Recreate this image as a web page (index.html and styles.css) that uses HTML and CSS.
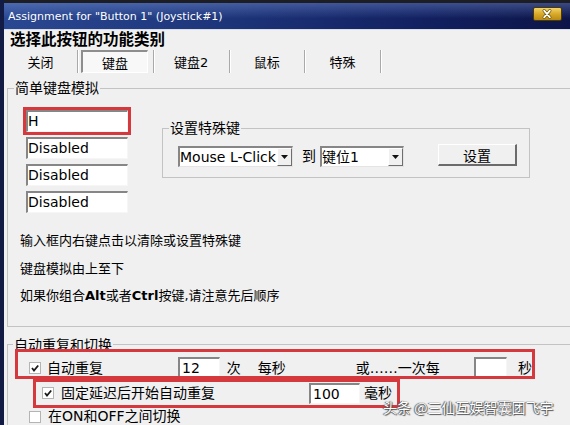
FILE: index.html
```html
<!DOCTYPE html>
<html lang="zh-CN">

<head>
    <meta charset="UTF-8">
    <title>Assignment for "Button 1" (Joystick#1)</title>
    <link rel="stylesheet" href="styles.css">
</head>

<body>
    <div class="window">
        <div class="titlebar">
            <span class="title">Assignment for "Button 1" (Joystick#1)</span>
            <span class="close-btn">
                <svg width="29" height="14" viewBox="0 0 29 14">
                    <path d="M11.5 3.5 L17.5 10.5 M17.5 3.5 L11.5 10.5" stroke="#6b5208" stroke-width="3.2" stroke-linecap="round" />
                    <path d="M11.5 3.5 L17.5 10.5 M17.5 3.5 L11.5 10.5" stroke="#fff" stroke-width="1.8" stroke-linecap="round" />
                </svg>
            </span>
        </div>

        <div class="client">
            <h1 class="heading">选择此按钮的功能类别</h1>

            <div class="tabs">
                <div class="tab">关闭</div>
                <div class="tab is-active"><span class="tab-pressed">键盘</span></div>
                <div class="tab">键盘2</div>
                <div class="tab">鼠标</div>
                <div class="tab">特殊</div>
            </div>

            <!-- simple keyboard emulation -->
            <fieldset class="group group-keys">
                <legend>简单键盘模拟</legend>
                <div class="key-row">
                    <div class="key-fields">
                        <div class="edit marked">H</div>
                        <div class="edit">Disabled</div>
                        <div class="edit">Disabled</div>
                        <div class="edit">Disabled</div>
                    </div>

                    <fieldset class="group group-special">
                        <legend>设置特殊键</legend>
                        <div class="special-row">
                            <div class="combo combo-action">
                                <span class="combo-text">Mouse L-Click</span>
                                <span class="combo-btn"><svg width="7" height="4" viewBox="0 0 7 4"><polygon points="0,0 7,0 3.5,4" fill="#111" /></svg></span>
                            </div>
                            <span class="to-label">到</span>
                            <div class="combo combo-slot">
                                <span class="combo-text">键位1</span>
                                <span class="combo-btn"><svg width="7" height="4" viewBox="0 0 7 4"><polygon points="0,0 7,0 3.5,4" fill="#111" /></svg></span>
                            </div>
                            <div class="push-btn">设置</div>
                        </div>
                    </fieldset>
                </div>

                <div class="hints">
                    <p>输入框内右键点击以清除或设置特殊键</p>
                    <p>键盘模拟由上至下</p>
                    <p>如果你组合<span class="latin">Alt</span>或者<span class="latin">Ctrl</span>按键,请注意先后顺序</p>
                </div>
            </fieldset>

            <!-- auto repeat and toggle -->
            <fieldset class="group group-repeat">
                <legend>自动重复和切换</legend>

                <div class="option-row repeat-main">
                    <span class="check is-checked"><svg width="10" height="10" viewBox="0 0 10 10"><path d="M2 5 L4 7.5 L8.2 2.5" fill="none" stroke="#1a1a1a" stroke-width="1.8" /></svg></span>
                    <span class="opt-label">自动重复</span>
                    <span class="num-field count-field">12</span>
                    <span class="unit unit-times">次</span>
                    <span class="unit unit-per">每秒</span>
                    <span class="unit unit-or">或……一次每</span>
                    <span class="num-field sec-field"></span>
                    <span class="unit unit-sec">秒</span>
                </div>

                <div class="option-row repeat-delay">
                    <span class="check is-checked"><svg width="10" height="10" viewBox="0 0 10 10"><path d="M2 5 L4 7.5 L8.2 2.5" fill="none" stroke="#1a1a1a" stroke-width="1.8" /></svg></span>
                    <span class="opt-label">固定延迟后开始自动重复</span>
                    <span class="num-field delay-field">100</span>
                    <span class="unit unit-ms">毫秒</span>
                </div>

                <div class="option-row toggle-row">
                    <span class="check"></span>
                    <span class="opt-label">在ON和OFF之间切换</span>
                </div>
            </fieldset>
        </div>
    </div>

    <div class="watermark">头条 @三仙互娱智囊团飞宇</div>
</body>

</html>
```

FILE: styles.css
```css
* {
    box-sizing: border-box;
}

body {
    margin: 0;
    height: 425px;
    overflow: hidden;
    position: relative;
    background: #f0f0f0;
    font-family: "DejaVu Sans", "Noto Sans CJK SC", sans-serif;
    color: #000;
}

/* Window frame */
.window {
    width: 570px;
    height: 425px;
    overflow: hidden;
    border-left: 4px solid #121b44;
    background: #f0f0f0;
}

.titlebar {
    display: flex;
    align-items: center;
    height: 30px;
    padding: 0 8px 0 4px;
    border-top: 3px solid #1d1e24;
    border-bottom: 1px solid #d9dde6;
    background:
        linear-gradient(180deg, rgba(140, 170, 235, 0.35) 0%, rgba(140, 170, 235, 0) 60%),
        linear-gradient(90deg, #2a4892 0%, #1d3479 40%, #122060 75%, #0d1548 100%);
}

.title {
    color: #fff;
    font-size: 11px;
    white-space: nowrap;
}

.close-btn {
    align-self: flex-start;
    margin: 4px 0 0 auto;
    width: 29px;
    height: 14px;
    border: 1px solid #4a3a08;
    border-radius: 2px;
    background: linear-gradient(180deg, #f1d36a 0%, #d9a928 50%, #b98a12 100%);
    display: flex;
}

.close-btn svg {
    margin: -1px 0 0 -1px;
}

/* Client area */
.heading {
    margin: 0 0 0 6px;
    height: 20px;
    line-height: 20px;
    font-size: 15.5px;
    font-weight: bold;
}

.tabs {
    display: flex;
    height: 23px;
}

.tab {
    width: 75.75px;
    display: flex;
    align-items: center;
    justify-content: center;
    font-size: 13px;
    border-right: 1px solid #a9a9a9;
    box-shadow: 1px 0 0 #fff;
}

.tab:first-child {
    width: 74px;
}

.tab.is-active {
    justify-content: flex-start;
}

.tab-pressed {
    margin-left: 3px;
    width: 67px;
    height: 23px;
    display: flex;
    align-items: center;
    justify-content: center;
    background: #f8f8f8;
    border-style: solid;
    border-width: 2px 1px 1px 2px;
    border-color: #8e8e8e #fff #fff #8e8e8e;
}

/* Group boxes */
.group {
    margin: 0 -10px 0 3px;
    padding: 0;
    min-width: 0;
    border: 1px solid #c3c3c3;
}

.group legend {
    padding: 0 1px;
    font-size: 14px;
    line-height: 14px;
}

.group-keys {
    margin-top: 8px;
    padding: 15px 0 16px 12px;
}

.group-keys > legend {
    margin-left: -6px;
}

.key-row {
    display: flex;
    align-items: flex-start;
}

.key-fields {
    margin-left: 6px;
    display: flex;
    flex-direction: column;
    gap: 5px;
}

.edit {
    width: 102px;
    height: 22px;
    background: #fff;
    border-style: solid;
    border-width: 2px 1px 1px 2px;
    border-color: #868686 #f6f6f6 #f6f6f6 #868686;
    font-size: 14px;
    line-height: 19px;
    white-space: nowrap;
}

.marked {
    outline: 3px solid #d6393d;
}

.group-special {
    margin: 11px 0 0 34px;
    width: 368px;
    padding: 10px 0 10px 15px;
}

.group-special > legend {
    margin-left: -9px;
}

.special-row {
    display: flex;
    align-items: flex-start;
}

.combo {
    display: flex;
    height: 21px;
    margin-top: 1px;
    background: #fff;
    border-style: solid;
    border-width: 2px 1px 1px 2px;
    border-color: #868686 #e4e4e4 #e4e4e4 #868686;
}

.combo-action {
    width: 115px;
}

.combo-slot {
    width: 84px;
}

.combo-text {
    flex: 1;
    font-size: 14px;
    line-height: 18px;
    white-space: nowrap;
    overflow: hidden;
}

.combo-btn {
    width: 15px;
    display: flex;
    align-items: center;
    justify-content: center;
    background: #f0f0f0;
    border-style: solid;
    border-width: 1px;
    border-color: #fff #6e6e6e #6e6e6e #fff;
}

.to-label {
    margin: 0 4px 0 9px;
    font-size: 14px;
    line-height: 22px;
}

.push-btn {
    margin: -1px 0 0 34px;
    width: 79px;
    height: 22px;
    display: flex;
    align-items: center;
    justify-content: center;
    font-size: 14px;
    background: #f0f0f0;
    border-style: solid;
    border-width: 1px 2px 2px 1px;
    border-color: #fff #6b6b6b #6b6b6b #fff;
}

.hints {
    margin-top: 14px;
    font-size: 13px;
}

.hints p {
    margin: 0;
    line-height: 27.5px;
}

.latin {
    font-weight: bold;
}

/* Auto repeat */
.group-repeat {
    margin-top: 11px;
    padding: 0 0 0 7px;
    border-bottom-width: 0;
}

.group-repeat > legend {
    margin-left: -2px;
}

.option-row {
    display: flex;
    align-items: flex-start;
    font-size: 14px;
    line-height: 22px;
    white-space: nowrap;
}

.repeat-main {
    margin-left: 3px;
    width: 514px;
    height: 24px;
    padding-top: 5px;
    outline: 3px solid #d6393d;
}

.repeat-delay {
    margin: 6px 0 0 21px;
    width: 361px;
    height: 23px;
    padding-top: 1px;
    line-height: 21px;
    outline: 3px solid #d6393d;
}

.toggle-row {
    margin: 2px 0 0 14px;
    height: 19px;
    line-height: 19px;
}

.check {
    width: 12px;
    height: 12px;
    margin-top: 5px;
    display: flex;
    align-items: center;
    justify-content: center;
    background: #fff;
    border: 1px solid #b4b4b4;
}

.repeat-delay .check {
    margin-top: 4px;
}

.toggle-row .check {
    margin-top: 4px;
}

.opt-label {
    margin-left: 6px;
}

.repeat-main .check {
    margin-left: 11px;
}

.repeat-delay .check {
    margin-left: 6px;
}

.repeat-delay .opt-label,
.toggle-row .opt-label {
    margin-left: 7px;
}

.num-field {
    height: 22px;
    padding-left: 2px;
    background: #fff;
    border-style: solid;
    border-width: 2px 1px 1px 2px;
    border-color: #868686 #f6f6f6 #f6f6f6 #868686;
    line-height: 19px;
}

.count-field {
    margin-left: 75px;
    width: 44px;
}

.unit-times {
    margin-left: 7px;
}

.unit-per {
    margin-left: 17px;
}

.unit-or {
    margin-left: 70px;
}

.sec-field {
    margin-left: 34px;
    width: 35px;
}

.unit-sec {
    margin-left: 11px;
}

.delay-field {
    margin-left: 94px;
    width: 51px;
    height: 21px;
    line-height: 18px;
}

.unit-ms {
    margin-left: 4px;
}

/* Watermark */
.watermark {
    position: absolute;
    left: 383px;
    top: 397px;
    font-family: "Noto Sans CJK SC", sans-serif;
    font-size: 14px;
    line-height: 20px;
    color: #fff;
    text-shadow: 0 0 1px #333, 1px 1px 1px #555, -1px 0 1px #666;
    white-space: nowrap;
    pointer-events: none;
}
```
